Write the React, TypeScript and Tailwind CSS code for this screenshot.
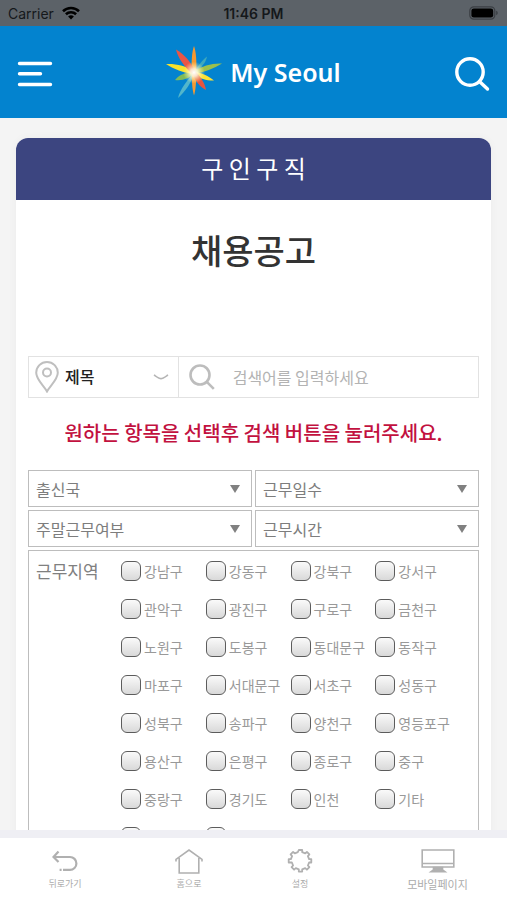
import React, { useState } from 'react';

const REGIONS = [
  '강남구', '강동구', '강북구', '강서구',
  '관악구', '광진구', '구로구', '금천구',
  '노원구', '도봉구', '동대문구', '동작구',
  '마포구', '서대문구', '서초구', '성동구',
  '성북구', '송파구', '양천구', '영등포구',
  '용산구', '은평구', '종로구', '중구',
  '중랑구', '경기도', '인천', '기타',
  '', '',
];

const FILTERS = ['출신국', '근무일수', '주말근무여부', '근무시간'];

const StatusBar: React.FC = () => (
  <div className="grid h-[26px] shrink-0 grid-cols-3 items-center bg-[#5c6268] px-2 font-['Inter',sans-serif] text-[14px] text-[#15181b]">
    <div className="flex items-center gap-2">
      <span>Carrier</span>
      <svg viewBox="0 0 18 14" className="h-[14px] w-[18px]" fill="none" stroke="#000" strokeWidth="2.6">
        <path d="M1 5.2a11.6 11.6 0 0 1 16 0" />
        <path d="M3.9 8.3a7.4 7.4 0 0 1 10.2 0" />
        <path d="M9 13.6l-2.9-3a4.2 4.2 0 0 1 5.8 0z" fill="#000" stroke="none" />
      </svg>
    </div>
    <span className="text-center font-semibold whitespace-nowrap">11:46 PM</span>
    <svg viewBox="0 0 30 14" className="h-[14px] w-[30px] justify-self-end">
      <rect x="0.8" y="0.8" width="25" height="12.4" rx="4" fill="none" stroke="#3b3f44" strokeWidth="1.2" />
      <rect x="2.4" y="2.4" width="21.8" height="9.2" rx="2.4" fill="#000" />
      <path d="M27.2 4.8c2 .6 2 3.8 0 4.4z" fill="#3b3f44" />
    </svg>
  </div>
);

const Starburst: React.FC = () => (
  <svg viewBox="0 0 56 54" className="h-[54px] w-[56px]">
    <defs>
      <radialGradient id="glow">
        <stop offset="0" stopColor="#fff" />
        <stop offset="0.35" stopColor="#fffbe0" stopOpacity="0.85" />
        <stop offset="1" stopColor="#ffe98a" stopOpacity="0" />
      </radialGradient>
    </defs>
    <path d="M28 28C32 21 37 14 41 11.500c-1 6-6 12-13 16.500z" fill="#3da8bd" />
    <path d="M28 28c-9-1-15 2-19 7 8 1 15-2 19-7z" fill="#7fbb57" />
    <path d="M28 28C22 34 14 44 12 53c7-6 14-16 16-25z" fill="#52b6cb" />
    <path d="M26 28C25 18 26 6 28 1c2 5 3 17 2 27z" fill="#f6982f" />
    <path d="M26 28c-.500 8 .500 18 2 22.500 1.500-4.500 2.500-14.500 2-22.500z" fill="#f39a35" />
    <path d="M28 26c8-5 18-8 28-7.500-8 5-18 9-28 10z" fill="#9cc04c" />
    <path d="M28 25.500C20 21 10 18.500 0 19c7 5 18 9 28 10z" fill="#f9e22b" />
    <path d="M28 26c7 2 15 5 20 9.500-6 .5-14-2-20-5.500z" fill="#fbe234" />
    <path d="M26 29C18 21 12 13 10 4.500 18 9 25 17 29 26z" fill="#ea5545" />
    <path d="M29 26c5 5 10 12 11 19-6-3-11-9-13-16z" fill="#e8543f" />
    <circle cx="28" cy="27.500" r="11" fill="url(#glow)" />
  </svg>
);

const Header: React.FC = () => (
  <header className="flex h-[92px] shrink-0 items-center justify-between bg-[#0383cf] px-[17px]">
    <button type="button" aria-label="메뉴" className="pt-1">
      <svg viewBox="0 0 36 26" className="h-[26px] w-[36px]" stroke="#fff" strokeWidth="3.4" strokeLinecap="round">
        <path d="M2.500 2.500h31M2.500 12.800h21M2.500 23.500h31" />
      </svg>
    </button>
    <a href="#home" className="flex items-center gap-2 text-white">
      <Starburst />
      <span className="font-['Noto_Sans',sans-serif] text-[25px] leading-8 font-semibold">My Seoul</span>
    </a>
    <button type="button" aria-label="검색" className="pt-1">
      <svg viewBox="0 0 36 36" className="h-[36px] w-[36px]" fill="none" stroke="#fff" strokeWidth="3.4" strokeLinecap="round">
        <circle cx="16" cy="16" r="13.2" />
        <path d="M25.500 25.500l8 7.500" />
      </svg>
    </button>
  </header>
);

const SearchBox: React.FC = () => {
  const [keyword, setKeyword] = useState('');

  return (
    <form className="flex h-[42px] border border-[#e2e2e2]">
      <div className="relative flex w-1/3 items-center border-r border-[#e2e2e2] pl-[6px]">
        <svg viewBox="0 0 24 32" className="h-[32px] w-[24px] shrink-0" fill="none" stroke="#bfbfbf" strokeWidth="2">
          <path d="M12 30.500C9 25 1.200 18.500 1.200 11.800a10.800 10.800 0 0 1 21.600 0C22.800 18.500 15 25 12 30.500z" />
          <circle cx="12" cy="11.500" r="4" />
        </svg>
        <select aria-label="검색 조건" className="h-full w-full appearance-none bg-transparent pb-[3px] pl-[6px] text-[16px] font-medium text-[#222] outline-none">
          <option>제목</option>
        </select>
        <svg viewBox="0 0 16 6" className="pointer-events-none absolute right-[9px] h-[6px] w-[16px]" fill="none" stroke="#b5b5b5" strokeWidth="1.600">
          <path d="M1 1c3 2 5 3.600 7 3.600S12 3 15 1" />
        </svg>
      </div>
      <label className="flex min-w-0 flex-1 items-center gap-[18px] pl-[10px]">
        <svg viewBox="0 0 26 26" className="h-[26px] w-[26px] shrink-0" fill="none" stroke="#bdbdbd" strokeWidth="2.600">
          <circle cx="11" cy="11" r="9.500" />
          <path d="M17.800 17.800l7 7" />
        </svg>
        <input
          aria-label="검색어"
          value={keyword}
          onChange={(e) => setKeyword(e.target.value)}
          placeholder="검색어를 입력하세요"
          className="h-[32px] min-w-0 flex-1 bg-transparent text-[16px] outline-none placeholder:text-[#b3b3b3]"
        />
      </label>
    </form>
  );
};

const FilterSelect: React.FC<{ label: string }> = ({ label }) => (
  <div className="relative flex h-[37px] items-center border border-[#bdbdbd]">
    <select aria-label={label} className="h-full w-full appearance-none bg-transparent px-[7px] text-[16px] text-[#7d7d7d] outline-none">
      <option>{label}</option>
    </select>
    <svg viewBox="0 0 10 8" className="pointer-events-none absolute right-[11px] h-[8px] w-[10px]" fill="#808080">
      <path d="M0 0h10L5 8z" />
    </svg>
  </div>
);

const RegionPicker: React.FC = () => (
  <fieldset className="flex border border-[#bdbdbd] pt-[10px] pr-[18px] pb-4 pl-[7px]">
    <div className="w-[85px] shrink-0 text-[17px] leading-5 text-[#808080]">근무지역</div>
    <div className="grid flex-1 grid-cols-4 gap-y-[18px]">
      {REGIONS.map((name, i) => (
        <label key={i} className="flex h-5 items-center gap-[3px] text-[14px] leading-5 whitespace-nowrap text-[#999]">
          <input
            type="checkbox"
            aria-label={name || '지역'}
            className="h-5 w-5 shrink-0 appearance-none rounded-[6px] border border-[#5c5c5c] bg-linear-to-b from-[#fafafa] to-[#d9d9d9] checked:to-[#8fb8e0]"
          />
          <span>{name}</span>
        </label>
      ))}
    </div>
  </fieldset>
);

const BottomNav: React.FC = () => (
  <nav className="grid h-[70px] shrink-0 grid-cols-[130fr_118fr_104fr_155fr] border-t-8 border-[#efeff4] bg-white pt-[10px] text-[9px] leading-3 text-[#ababab]">
    <a href="#back" className="flex flex-col items-center gap-1">
      <svg viewBox="0 0 26 26" className="h-[26px] w-[26px]" fill="none" stroke="#b0b0b0" strokeWidth="2.200">
        <path d="M6.500 3.500L1.500 9l5 5M1.800 9H18a6.400 6.400 0 0 1 0 12.800H11M7.600 21.800h2" />
      </svg>
      뒤로가기
    </a>
    <a href="#home" className="flex flex-col items-center gap-1">
      <svg viewBox="0 0 28 26" className="h-[26px] w-[28px]" fill="none" stroke="#b0b0b0" strokeWidth="1.600">
        <path d="M1 13.500v-2.200L14 2l13 9.300v2.200M4.200 10v15h19.600V10" />
      </svg>
      홈으로
    </a>
    <a href="#settings" className="flex flex-col items-center gap-1">
      <svg viewBox="0 0 26 26" className="h-[26px] w-[26px]" fill="none" stroke="#b0b0b0" strokeWidth="1.800" strokeLinejoin="round">
        <path d="M11.300 1.200h3.400v2.200l3 1.200 1.700-1.500 2.500 2.500-1.500 1.700 1.200 3h2.200v3.400h-2.200l-1.200 3 1.500 1.700-2.500 2.500-1.700-1.500-3 1.200v2.200h-3.400v-2.200l-3-1.200-1.700 1.500-2.500-2.500 1.500-1.700-1.200-3H1.200v-3.400h2.200l1.200-3-1.500-1.700 2.500-2.500 1.700 1.500 3-1.200z" transform="translate(0.500 0.800)" />
      </svg>
      설정
    </a>
    <a href="#mobile" className="flex flex-col items-center gap-1 pl-4 text-[11px]">
      <svg viewBox="0 0 34 26" className="h-[26px] w-[34px]" fill="none" stroke="#b0b0b0" strokeWidth="1.600">
        <path d="M1.200 2h31.600v17H1.200zM1.200 15.500h31.600" />
        <path d="M12.500 19.500h9v2.500l2.500 1.800H10l2.500-1.800z" fill="#b0b0b0" />
      </svg>
      모바일페이지
    </a>
  </nav>
);

const App: React.FC = () => {
  return (
    <div className="flex h-screen flex-col bg-[#f4f4f4] font-['Noto_Sans_CJK_KR',sans-serif]">
      <StatusBar />
      <Header />
      <main className="min-h-0 flex-1 overflow-hidden px-4 pt-5">
        <section className="rounded-t-xl bg-white shadow-[0_0_8px_rgba(0,0,0,0.04)]">
          <h1 className="rounded-t-xl bg-[#3c4580] pt-[14px] pb-4 text-center text-[24px] leading-8 text-white">구 인 구 직</h1>
          <div className="px-3 pt-[30px]">
            <h2 className="text-center text-[34px] leading-10 font-medium text-[#333]">채용공고</h2>
            <div className="pt-[86px]">
              <SearchBox />
            </div>
            <p className="pt-[21px] pb-[23px] text-center text-[20px] leading-7 font-medium whitespace-nowrap text-[#c2113f]">
              원하는 항목을 선택후 검색 버튼을 눌러주세요.
            </p>
            <div className="grid grid-cols-2 gap-[3px] pb-[3px]">
              {FILTERS.map((label) => (
                <FilterSelect key={label} label={label} />
              ))}
            </div>
            <RegionPicker />
          </div>
        </section>
      </main>
      <BottomNav />
    </div>
  );
};

export default App;
